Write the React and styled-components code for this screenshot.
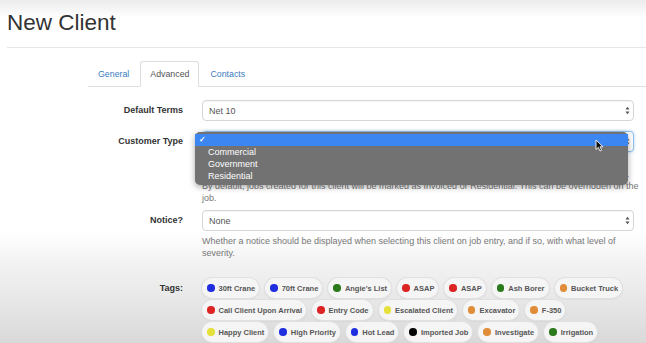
import React from "react";
import styled, { createGlobalStyle } from "styled-components";

const Global = createGlobalStyle`
  html, body { margin: 0; padding: 0; }
  body {
    font-family: "Liberation Sans", Arial, sans-serif;
    min-height: 343px;
    background: linear-gradient(to bottom, #ececec 0px, #ffffff 18px, #ffffff 232px, #f3f3f3 262px, #e4e4e4 310px, #d9d9d9 343px);
    overflow: hidden;
  }
`;

const Page = styled.div`
  padding: 0 0 0 7px;
`;

const Title = styled.h1`
  margin: 10px 0 0;
  font-size: 22.5px;
  line-height: 25px;
  font-weight: 400;
  color: #333;
`;

const Rule = styled.hr`
  margin: 12px 0 0;
  border: 0;
  border-top: 1px solid #e6e6e6;
`;

const Content = styled.div`
  margin: 13px 0 0 81px;
`;

const Nav = styled.ul`
  display: flex;
  margin: 0;
  padding: 0;
  list-style: none;
  height: 25px;
  border-bottom: 1px solid #dedede;
`;

const Tab = styled.li`
  box-sizing: border-box;
  height: 26px;
  margin: 0 1px -1px 0;
  padding: 0 9px;
  line-height: 24px;
  font-size: 8.8px;
  border: 1px solid ${(p) => (p.$active ? "#dedede" : "transparent")};
  border-bottom-color: transparent;
  border-radius: 3px 3px 0 0;
  background: ${(p) => (p.$active ? "#fff" : "transparent")};
  color: ${(p) => (p.$active ? "#555" : "#3a7cc0")};
`;

const Form = styled.div`
  margin-top: 13px;
`;

const Group = styled.div`
  display: grid;
  grid-template-columns: 95px 432px;
  column-gap: 19px;
  margin-bottom: ${(p) => p.$mb ?? 10}px;
`;

const Label = styled.div`
  text-align: right;
  font-size: 9px;
  font-weight: 700;
  color: #333;
  line-height: ${(p) => p.$lh ?? 21}px;
`;

const Control = styled.div`
  position: relative;
`;

const SelectBox = styled.div`
  box-sizing: border-box;
  height: 21px;
  display: flex;
  align-items: center;
  justify-content: space-between;
  padding: 0 3px 0 6px;
  background: #fff;
  border: 1px solid ${(p) => (p.$focus ? "#8fc1ee" : "#d6d6d6")};
  border-radius: 4px;
  box-shadow: ${(p) => (p.$focus ? "0 0 3px rgba(102,175,233,0.6)" : "inset 0 1px 1px rgba(0,0,0,0.04)")};
  font-size: 9px;
  color: #555;
`;

const Help = styled.div`
  margin: ${(p) => p.$mt ?? 4}px 0 ${(p) => p.$mb ?? 7}px;
  font-size: 9px;
  line-height: 12px;
  color: #777;
  white-space: nowrap;
`;

const Dropdown = styled.div`
  position: absolute;
  left: -7px;
  top: 1px;
  width: 433px;
  height: 53px;
  box-sizing: border-box;
  padding-top: 2px;
  border-radius: 5px;
  background: #727272;
  box-shadow: 0 2px 6px rgba(0, 0, 0, 0.35);
  z-index: 2;
`;

const Option = styled.div`
  position: relative;
  height: 12px;
  line-height: 12px;
  padding-left: 13px;
  font-size: 9px;
  color: #fff;
  background: ${(p) => (p.$hl ? "#3b86f0" : "transparent")};
`;

const Check = styled.span`
  position: absolute;
  left: 4px;
  top: 0;
  font-size: 8px;
  font-weight: 700;
  color: #fff;
`;

const Cursor = styled.svg`
  position: absolute;
  left: 400px;
  top: 7px;
`;

const Tags = styled.div`
  display: flex;
  flex-wrap: wrap;
  column-gap: 6px;
  row-gap: 2px;
`;

const Pill = styled.div`
  box-sizing: border-box;
  height: 20px;
  display: flex;
  align-items: center;
  gap: 4px;
  padding: 0 4px 0 5px;
  border-radius: 10px;
  background: #f5f5f5;
  box-shadow: 0 0 0 1px #e0e0e0, 0 1px 2px rgba(0, 0, 0, 0.14);
  font-size: 7.5px;
  font-weight: 700;
  color: #555;
  white-space: nowrap;
`;

const Dot = styled.span`
  width: 7.5px;
  height: 7.5px;
  border-radius: 50%;
  background: ${(p) => p.$c};
  flex: none;
`;

const Arrows = () => (
  <svg width="5" height="9" viewBox="0 0 5 9">
    <path d="M0.5 3.5 L2.5 0.8 L4.5 3.5 Z" fill="#555" />
    <path d="M0.5 5.5 L2.5 8.2 L4.5 5.5 Z" fill="#555" />
  </svg>
);

const C = {
  blue: "#1f2fe0",
  green: "#2b7a1b",
  red: "#dc2424",
  orange: "#e08c38",
  yellow: "#e6e03a",
  black: "#050505",
};

const tags = [
  ["30ft Crane", C.blue],
  ["70ft Crane", C.blue],
  ["Angie's List", C.green],
  ["ASAP", C.red],
  ["ASAP", C.red],
  ["Ash Borer", C.green],
  ["Bucket Truck", C.orange],
  ["Call Client Upon Arrival", C.red],
  ["Entry Code", C.red],
  ["Escalated Client", C.yellow],
  ["Excavator", C.orange],
  ["F-350", C.orange],
  ["Happy Client", C.yellow],
  ["High Priority", C.blue],
  ["Hot Lead", C.blue],
  ["Imported Job", C.black],
  ["Investigate", C.orange],
  ["Irrigation", C.green],
  ["Lawn Care", C.green],
  ["New Client", C.blue],
  ["Pool", C.blue],
];

export default function App() {
  return (
    <>
      <Global />
      <Page>
        <Title>New Client</Title>
        <Rule />
        <Content>
          <Nav>
            <Tab>General</Tab>
            <Tab $active>Advanced</Tab>
            <Tab>Contacts</Tab>
          </Nav>
          <Form>
            <Group>
              <Label>Default Terms</Label>
              <Control>
                <SelectBox>
                  <span>Net 10</span>
                  <Arrows />
                </SelectBox>
              </Control>
            </Group>
            <Group $mb={0}>
              <Label>Customer Type</Label>
              <Control>
                <SelectBox $focus>
                  <span></span>
                  <Arrows />
                </SelectBox>
                <Help $mt={4} $mb={6}>
                  Whether this client is a commercial, government or residential customer. This is used for reporting, and to
                  <br />
                  determine which pricing rules and tax settings should apply to new jobs entered for this client in the system.
                  <br />
                  By default, jobs created for this client will be marked as Invoiced or Residential. This can be overridden on the
                  <br />
                  job.
                </Help>
                <Dropdown>
                  <Option $hl>
                    <Check>✓</Check>
                  </Option>
                  <Option>Commercial</Option>
                  <Option>Government</Option>
                  <Option>Residential</Option>
                  <Cursor width="9" height="13" viewBox="0 0 9 13">
                    <path d="M1 1 L1 10.5 L3.3 8.4 L5 12 L6.6 11.3 L5 7.8 L8 7.8 Z" fill="#111" stroke="#fff" strokeWidth="0.9" />
                  </Cursor>
                </Dropdown>
              </Control>
            </Group>
            <Group $mb={0}>
              <Label>Notice?</Label>
              <Control>
                <SelectBox>
                  <span>None</span>
                  <Arrows />
                </SelectBox>
                <Help $mt={4} $mb={19}>
                  Whether a notice should be displayed when selecting this client on job entry, and if so, with what level of
                  <br />
                  severity.
                </Help>
              </Control>
            </Group>
            <Group>
              <Label $lh={20}>Tags:</Label>
              <Tags>
                {tags.map(([name, color], i) => (
                  <Pill key={i}>
                    <Dot $c={color} />
                    {name}
                  </Pill>
                ))}
              </Tags>
            </Group>
          </Form>
        </Content>
      </Page>
    </>
  );
}
